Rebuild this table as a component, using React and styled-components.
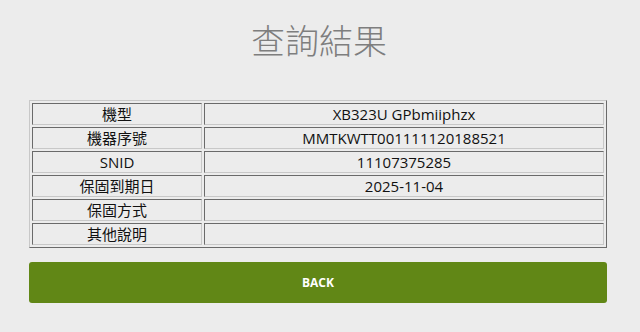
import React from "react";
import styled, { createGlobalStyle } from "styled-components";

const Global = createGlobalStyle`
  html, body {
    margin: 0;
    padding: 0;
    background: #ececec;
  }
  body {
    font-family: "Open Sans", "Noto Sans CJK TC", sans-serif;
  }
`;

const Page = styled.div`
  width: 578px;
  padding: 0 0 0 29px;
  display: flex;
  flex-direction: column;
`;

const Title = styled.h1`
  margin: 18px 0 0;
  height: 82px;
  text-align: center;
  font-family: "Noto Sans CJK TC", sans-serif;
  font-weight: 300;
  font-size: 34px;
  line-height: 44px;
  color: #7e7e7e;
  padding-left: 2px;
`;

const Table = styled.table`
  width: 578px;
  border-collapse: separate;
  border-spacing: 2px;
  border-style: solid;
  border-width: 1px;
  border-color: #c8c8c8 #6a6a6a #6a6a6a #c8c8c8;
`;

const Cell = styled.td`
  width: ${(p) => p.$w || "auto"};
  height: 20px;
  padding: 0 1px;
  text-align: center;
  font-size: 15px;
  line-height: 20px;
  color: #111;
  border-style: solid;
  border-width: 1px;
  border-color: #6a6a6a #c8c8c8 #c8c8c8 #6a6a6a;
`;

const BackButton = styled.button`
  margin-top: 14px;
  width: 578px;
  height: 41px;
  border: none;
  border-radius: 3px;
  background: #618716;
  color: #fff;
  font-family: "Open Sans", sans-serif;
  font-weight: 700;
  font-size: 12px;
  cursor: pointer;
`;

const rows = [
  ["機型", "XB323U GPbmiiphzx"],
  ["機器序號", "MMTKWTT001111120188521"],
  ["SNID", "11107375285"],
  ["保固到期日", "2025-11-04"],
  ["保固方式", ""],
  ["其他說明", ""],
];

export default function App() {
  return (
    <>
      <Global />
      <Page>
        <Title>查詢結果</Title>
        <Table>
          <tbody>
            {rows.map(([label, value]) => (
              <tr key={label}>
                <Cell $w="166px">{label}</Cell>
                <Cell>{value}</Cell>
              </tr>
            ))}
          </tbody>
        </Table>
        <BackButton>BACK</BackButton>
      </Page>
    </>
  );
}
